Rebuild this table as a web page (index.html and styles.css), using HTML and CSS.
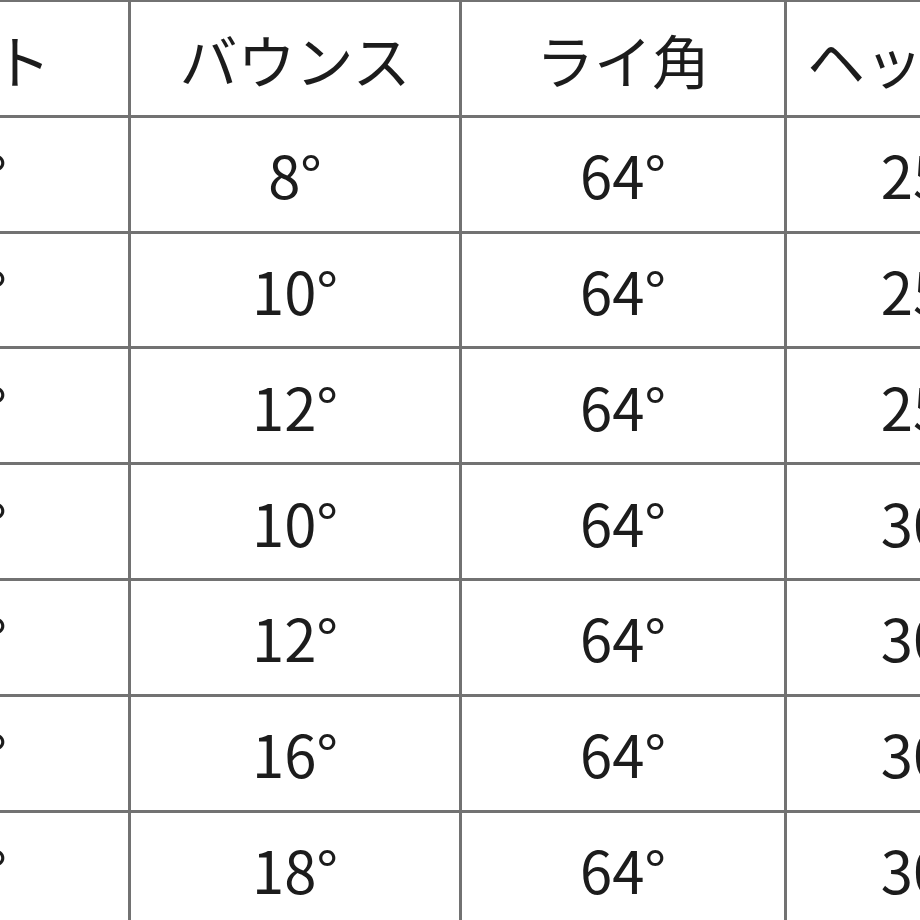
FILE: index.html
```html
<!DOCTYPE html>
<html lang="ja">
<head>
<meta charset="utf-8">
<link rel="stylesheet" href="styles.css">
</head>
<body>
<div class="frame">
  <div class="spec">
    <div class="cell head">ロフト</div>
    <div class="cell head">バウンス</div>
    <div class="cell head">ライ角</div>
    <div class="cell head">ヘッド重量</div>

    <div class="cell">50°</div><div class="cell">8°</div><div class="cell">64°</div><div class="cell">250 g</div>
    <div class="cell">52°</div><div class="cell">10°</div><div class="cell">64°</div><div class="cell">252 g</div>
    <div class="cell">54°</div><div class="cell">12°</div><div class="cell">64°</div><div class="cell">254 g</div>
    <div class="cell">56°</div><div class="cell">10°</div><div class="cell">64°</div><div class="cell">300 g</div>
    <div class="cell">56°</div><div class="cell">12°</div><div class="cell">64°</div><div class="cell">300 g</div>
    <div class="cell">58°</div><div class="cell">16°</div><div class="cell">64°</div><div class="cell">302 g</div>
    <div class="cell">60°</div><div class="cell">18°</div><div class="cell">64°</div><div class="cell">304 g</div>
  </div>
</div>
</body>
</html>
```
FILE: styles.css
```css
html, body {
  margin: 0;
  padding: 0;
  background: #ffffff;
}

.frame {
  width: 920px;
  height: 920px;
  overflow: hidden;
}

.spec {
  display: grid;
  grid-template-columns: 328px 328px 322px 330px;
  grid-auto-rows: 112.8px;
  gap: 3px;
  padding-top: 2px;
  margin-left: -200px;
  width: max-content;
  background: #727272;
}

.cell {
  background: #ffffff;
  display: flex;
  align-items: center;
  justify-content: center;
  font-family: "Noto Sans CJK JP", "Noto Sans", sans-serif;
  font-size: 58px;
  font-weight: 400;
  color: #1c1c1c;
  white-space: nowrap;
}

.head {
  padding-top: 2px;
  box-sizing: border-box;
}
```
